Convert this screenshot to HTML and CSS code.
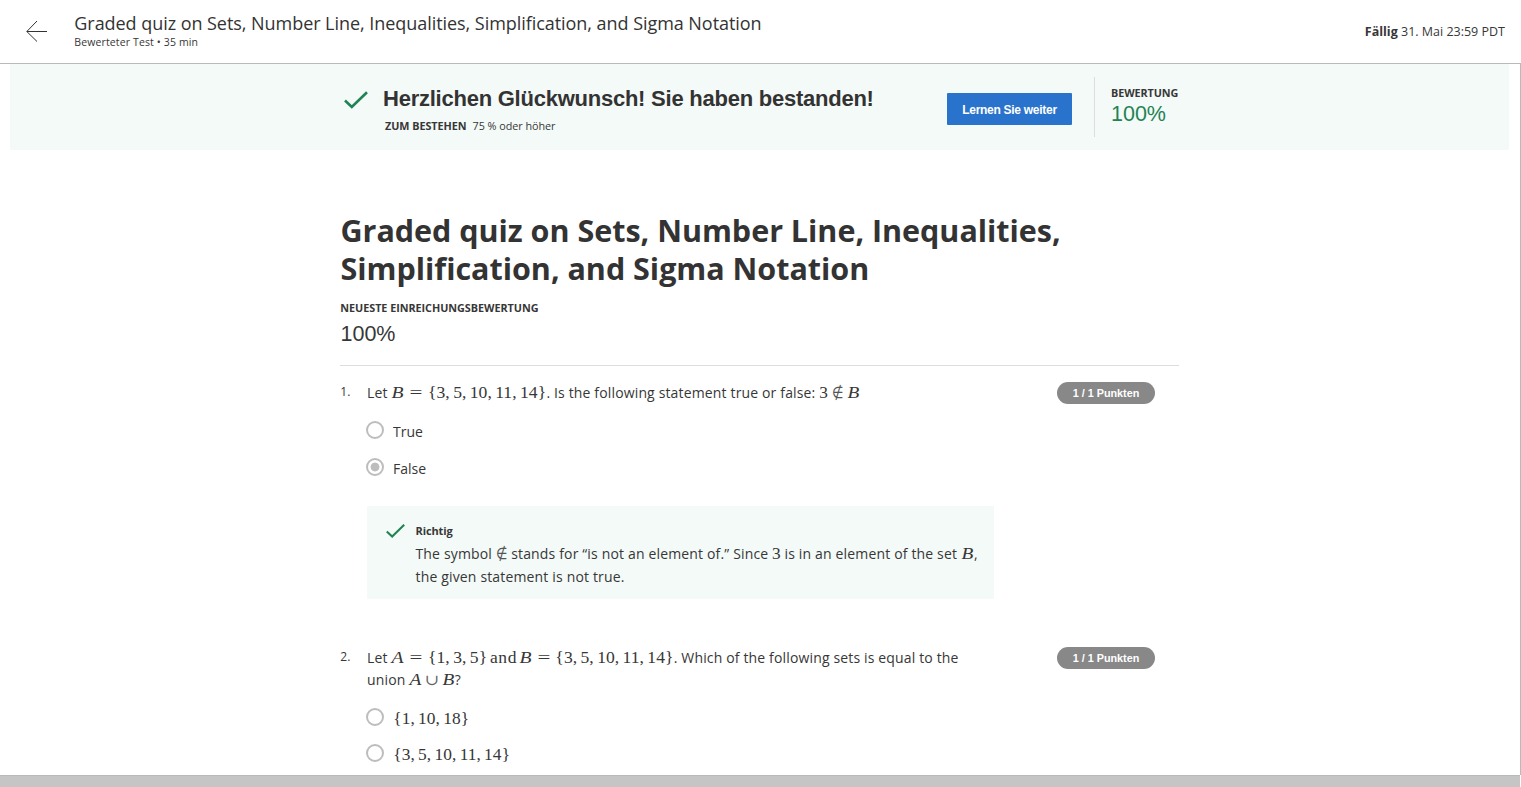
FILE: index.html
```html
<!DOCTYPE html>
<html lang="de">
<head>
<meta charset="utf-8">
<title>Graded quiz</title>
<link rel="stylesheet" href="styles.css">
</head>
<body>
<header class="topbar">
  <svg class="back" viewBox="0 0 22 22"><path d="M11 1L.8 11.500L11 21.500M.8 11.500H21"/></svg>
  <div class="topbar-text">
    <div class="topbar-title"><span>Graded quiz on Sets, Number Line, Inequalities, Simplification, and Sigma Notation</span></div>
    <div class="topbar-sub"><span>Bewerteter Test • 35 min</span></div>
  </div>
  <div class="due"><b>Fällig</b> 31. Mai 23:59 PDT</div>
</header>
<main class="page">
  <section class="banner">
    <svg class="check" viewBox="0 0 24 18"><path d="M1 9.500L7.800 16L23 1.200"/></svg>
    <div class="passed">
      <div class="passed-title"><span>Herzlichen Glückwunsch! Sie haben bestanden!</span></div>
      <div class="passed-sub"><b>ZUM BESTEHEN</b><span>75 % oder höher</span></div>
    </div>
    <div class="button">Lernen Sie weiter</div>
    <div class="grade"><b>BEWERTUNG</b><span>100%</span></div>
  </section>
  <section class="content">
    <h1>Graded quiz on Sets, Number Line, Inequalities,<br>Simplification, and Sigma Notation</h1>
    <div class="latest">NEUESTE EINREICHUNGSBEWERTUNG</div>
    <div class="score">100%</div>
    <article class="question">
      <div class="num">1.</div>
      <div class="body">
        <div class="prompt">Let <span class="m q"><i>B</i><s>=</s><u>{</u>3<em>,</em>5<em>,</em>10<em>,</em>11<em>,</em>14<u>}</u></span>. Is the following statement true or false: <span class="m">3<small class="rel">∉</small><i>B</i></span></div>
        <div class="option"><span class="radio"></span><span>True</span></div>
        <div class="option second"><span class="radio on"></span><span>False</span></div>
        <div class="feedback">
          <svg class="check" viewBox="0 0 24 18"><path d="M1 9.500L7.800 16L23 1.200"/></svg>
          <div><div class="right">Richtig</div>
          <div class="explain">The symbol <span class="m"><small>∉</small></span> stands for “is not an element of.” Since <span class="m">3</span> is in an element of the set <span class="m"><i>B</i></span>,<br>the given statement is not true.</div></div>
        </div>
      </div>
      <div class="points">1 / 1 Punkten</div>
    </article>
    <article class="question next">
      <div class="num">2.</div>
      <div class="body">
        <div class="prompt">Let <span class="m q"><i>A</i><s>=</s><u>{</u>1<em>,</em>3<em>,</em>5<u>}</u></span><span class="m and">and</span><span class="m q"><i>B</i><s>=</s><u>{</u>3<em>,</em>5<em>,</em>10<em>,</em>11<em>,</em>14<u>}</u></span>. Which of the following sets is equal to the<br>union <span class="m"><i>A</i><small class="cup">∪</small><i>B</i></span>?</div>
        <div class="option"><span class="radio"></span><span class="m opt"><u>{</u>1<em>,</em>10<em>,</em>18<u>}</u></span></div>
        <div class="option second"><span class="radio"></span><span class="m opt"><u>{</u>3<em>,</em>5<em>,</em>10<em>,</em>11<em>,</em>14<u>}</u></span></div>
      </div>
      <div class="points">1 / 1 Punkten</div>
    </article>
  </section>
</main>
<footer class="bottom"></footer>
</body>
</html>
```
FILE: styles.css
```css
* { box-sizing: border-box; }
body { margin: 0; height: 787px; overflow: hidden; display: flex; flex-direction: column; background: #fff; color: #373737; font-family: "Open Sans", sans-serif; font-size: 14px; }
.topbar { height: 64px; flex: none; display: flex; border-bottom: 1px solid #b9bbba; padding: 0 16px 0 26px; }
.back { width: 22px; height: 22px; margin: 20px 26px 0 0; fill: none; stroke: #333; stroke-width: 1; }
.topbar-text { flex: 1; padding: 11px 0 0 .3px; white-space: nowrap; }
.topbar-title { font-size: 18px; line-height: 25px; color: #333; letter-spacing: -.05px; }
.topbar-sub { font-size: 10.500px; line-height: 13px; letter-spacing: .13px; }
.due { font-size: 12.500px; line-height: 63px; white-space: nowrap; }
.page { height: 711px; flex: none; overflow: hidden; border-right: 1px solid #b9bbba; padding: 0 11px 0 10px; }
.banner { height: 86px; background: #f3faf8; display: flex; padding-left: 334px; }
.check { width: 24px; height: 18px; flex: none; fill: none; stroke: #1f8354; stroke-width: 2.600; }
.banner .check { margin: 27px 15px 0 0; }
.passed { width: 564px; padding-top: 20px; white-space: nowrap; }
.passed-title { font: bold 22px/29px "Liberation Sans", sans-serif; color: #333; letter-spacing: -.24px; }
.passed-sub { font-size: 10.800px; line-height: 16px; padding: 5px 0 0 2px; letter-spacing: -.04px; }
.passed-sub b { margin-right: 6px; }
.button { width: 125px; height: 32px; margin: 29px 22px 0 0; background: #2a73cc; border-radius: 1px; color: #fff; font: bold 12px/34px "Liberation Sans", sans-serif; letter-spacing: -.28px; text-align: center; }
.grade { height: 60px; margin-top: 13px; border-left: 1px solid #ddd; padding: 8px 0 0 16px; display: flex; flex-direction: column; }
.grade b { font-size: 10.800px; line-height: 15px; letter-spacing: -.07px; }
.grade span, .score { font: 21.500px/26px "Liberation Sans", sans-serif; }
.grade span { color: #1f8354; padding-top: 1px; }
.content { width: 839px; margin: 61px 0 0 330px; }
h1 { margin: 0; font-size: 30.500px; line-height: 38px; color: #333; white-space: nowrap; padding-left: .5px; letter-spacing: -.02px; }
.latest { font-size: 10.800px; line-height: 16px; font-weight: bold; margin-top: 13px; letter-spacing: -.03px; padding-left: .3px; }
.score { margin-top: 5px; height: 45px; border-bottom: 1px solid #ddd; padding-left: .5px; }
.question { display: flex; padding-top: 16px; }
.num { width: 27px; flex: none; font-size: 12px; line-height: 20px; padding-left: .3px; }
.body { width: 690px; flex: none; }
.prompt { line-height: 22px; white-space: nowrap; letter-spacing: .15px; }
.option { display: flex; align-items: center; height: 22px; margin-top: 16px; gap: 9px; }
.second { margin-top: 15px; }
.radio { width: 18px; height: 18px; border: 2px solid #bdbdbd; border-radius: 50%; margin: -2px 0 0 -1px; }
.on { background: radial-gradient(circle, #bdbdbd 4px, #fff 4.800px); }
.feedback { width: 627px; height: 93px; margin-top: 27px; background: #f3faf8; display: flex; padding: 16px 0 0 19px; }
.feedback .check { width: 19px; height: 16px; margin: 1px 10px 0 0; }
.right { font-size: 11px; line-height: 18px; font-weight: bold; letter-spacing: -.1px; padding-left: .5px; }
.explain { line-height: 23px; padding: 2px 0 0 .5px; white-space: nowrap; letter-spacing: .16px; }
.points { width: 98px; height: 22px; border-radius: 11px; background: #888; color: #fff; text-align: center; font: bold 10.800px/22px "Liberation Sans", sans-serif; }
.next { padding-top: 48px; }
.next .option { margin-top: 17px; }
.next .second { margin-top: 14px; }
.next .radio { margin-top: -4px; }
.m { font: 17.300px/16px "Liberation Serif", serif; white-space: nowrap; letter-spacing: 0; }
.q { font-size: 17.600px; }
.m i, .m u, .m em, .m s { display: inline-block; font-style: normal; text-decoration: none; text-align: center; }
.m i { width: .75em; font-style: italic; transform: scaleX(1.120); }
.m u { width: .5em; }
.m em { width: .278em; margin-right: .167em; text-align: left; }
.m s { width: .778em; margin: 0 .278em 0 .26em; transform: scaleX(1.300); }
.and { font-size: 17.500px; letter-spacing: .7px; margin: 0 1.500px 0 2.500px; }
.opt { font-size: 17.400px; margin-top: -2px; }
.m small { display: inline-flex; justify-content: center; width: 11.500px; font: 200 16px/16px "DejaVu Sans Light", "DejaVu Sans", sans-serif; color: #555; transform: scaleX(.82); }
.m .rel { margin: 0 4px; }
.m .cup { margin: 0 4px; font: 15px/16px "DejaVu Serif", serif; transform: scaleX(1.150); color: #666; }
.bottom { height: 12px; border-top: 1px solid #b9bbba; background: #c4c5c4; margin-right: 1px; flex: none; }
```
